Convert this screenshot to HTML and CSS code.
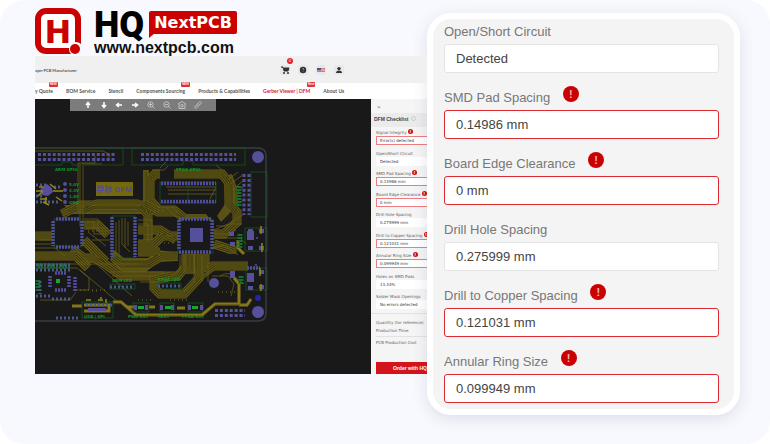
FILE: index.html
```html
<!DOCTYPE html>
<html lang="en">
<head>
<meta charset="utf-8">
<title>HQ NextPCB Gerber Viewer</title>
<link rel="stylesheet" href="styles.css">
</head>
<body>
<main class="hero">
  <div class="left">
    <header class="brand">
      <svg class="brand-mark" viewBox="0 0 46 46" aria-hidden="true">
        <rect x="3" y="3" width="40" height="40" rx="8" fill="#fff" stroke="#cb0000" stroke-width="6"/>
        <text x="23" y="35" text-anchor="middle" class="mark-letter">H</text>
        <circle cx="41" cy="41" r="7" fill="#f8f9fe"/>
        <circle cx="40" cy="41" r="5" fill="#cb0000"/>
      </svg>
      <div class="brand-words">
        <div class="brand-top"><span class="hq">HQ</span><span class="next">NextPCB</span></div>
        <div class="site">www.nextpcb.com</div>
      </div>
    </header>

    <section class="app">
      <div class="app-head">
        <span class="tagline">ayer PCB Manufacturer</span>
        <div class="head-icons">
          <button class="hicon" aria-label="Cart"><svg viewBox="0 0 10 10"><path d="M1 2h2l1 4h4l1-3H4" fill="#333" stroke="#333"/><circle cx="4" cy="8" r="1" fill="#333"/><circle cx="8" cy="8" r="1" fill="#333"/></svg><span class="count">0</span></button>
          <button class="hicon" aria-label="Help"><svg viewBox="0 0 10 10"><circle cx="5" cy="5" r="3.2" fill="#333"/><path d="M4 4q1-1.2 2 0q0 .7-1 1.2M5 6.3v.8" fill="none" stroke="#aaa" stroke-width=".7"/></svg></button>
          <button class="hicon" aria-label="Language"><svg viewBox="0 0 10 10"><path d="M1 3h8v4H1z" fill="#eed5d8"/><path d="M1 3.5h8M1 5h8M1 6.5h8" stroke="#d65c68" stroke-width=".8"/><path d="M1 3h4v2.3H1z" fill="#4b5295"/></svg></button>
          <button class="hicon" aria-label="Account"><svg viewBox="0 0 10 10"><circle cx="5" cy="3.6" r="1.7" fill="#333"/><path d="M2 8q0-2.6 3-2.6T8 8z" fill="#333"/></svg></button>
        </div>
      </div>
      <nav class="nav">
        <a href="#">y Quote<span class="new">NEW</span></a>
        <a href="#">BOM Service</a>
        <a href="#">Stencil</a>
        <a href="#">Components Sourcing<span class="new">NEW</span></a>
        <a href="#">Products &amp; Capabilities</a>
        <a href="#" class="current">Gerber Viewer | DFM<span class="new">New</span></a>
        <a href="#">About Us</a>
      </nav>
      <div class="work">
        <div class="viewer">
          <div class="tools">
            <button aria-label="Up"><svg viewBox="0 0 8 8"><path d="M4 7V2M2 4l2-2.500L6 4"/></svg></button>
            <button aria-label="Down"><svg viewBox="0 0 8 8"><path d="M4 1v5M2 4l2 2.500L6 4"/></svg></button>
            <button aria-label="Left"><svg viewBox="0 0 8 8"><path d="M7 4H2M4 2L1.500 4L4 6"/></svg></button>
            <button aria-label="Right"><svg viewBox="0 0 8 8"><path d="M1 4h5M4 2l2.500 2L4 6"/></svg></button>
            <button aria-label="Zoom in"><svg viewBox="0 0 8 8" class="thin"><circle cx="3.500" cy="3.500" r="2.700"/><path d="M5.500 5.500L7.500 7.500M2 3.500h3M3.500 2v3"/></svg></button>
            <button aria-label="Zoom out"><svg viewBox="0 0 8 8" class="thin"><circle cx="3.500" cy="3.500" r="2.700"/><path d="M5.500 5.500L7.500 7.500M2 3.500h3"/></svg></button>
            <button aria-label="Reset"><svg viewBox="0 0 8 8" class="thin"><path d="M0 3l4-2.500L8 3M1 3v4.500h6V3"/><circle cx="4" cy="4.700" r="1.300"/></svg></button>
            <button aria-label="Measure"><svg viewBox="0 0 8 8" class="thin"><path d="M.5 6L6 .5L7.500 2L2 7.500zM2.500 4l1 1M4 2.500l1 1"/></svg></button>
          </div>
          <svg class="board" viewBox="35 99 336 275" preserveAspectRatio="xMinYMin slice" role="img" aria-label="Circuit board">
            <defs>
              <path id="b1" d="M35 236H52M83 210L97 204H137L148 214V240M62 214L80 205H146L158 212H178M84 225H98L108 235M84 240L106 262M72 249L84 258H96L122 276H178L186 266V254"/>
              <path id="b2" d="M160 174H155L150 179V200L159 210H174L184 218M174 174H222L229 183V204L237 212V222L224 234H214"/>
              <path id="b3" d="M35 256H76L88 268M114 258L122 264H148L162 256H178M138 244H154L162 236H178M138 252H160M214 244L232 250V254M138 230H160L176 240"/>
              <path id="b4" d="M199 254V278L184 294H160L154 288V280L172 276M205 254V272L213 266H248M190 254V274"/>
            </defs>
            <path class="edge" d="M35 148H258Q266 148 266 156V313Q266 321 258 321H35"/>

            <g class="copper">
              <path class="solid" d="M64 205H148L160 214H72zM143 170h6v35h-6zM180 214h26l4 5h-32zM114 250l10 8h24l10-8 20 3v8l-20 1-12 10h-24l-12-12zM224 176l8-2 5 14 1 14-9 12-8 8-4-6 8-12zM184 254h18l-2 12-5 8z"/>
              <use href="#b2" class="w9"/><use href="#b2" class="w7"/><use href="#b2" class="w5"/><use href="#b2" class="w3"/><use href="#b2" class="w1"/>
              <use href="#b1" class="w9"/><use href="#b1" class="w7"/><use href="#b1" class="w5"/><use href="#b1" class="w3"/><use href="#b1" class="w1"/>
              <use href="#b3" class="w9"/><use href="#b3" class="w7"/><use href="#b3" class="w5"/><use href="#b3" class="w3"/><use href="#b3" class="w1"/>
              <use href="#b4" class="w9"/><use href="#b4" class="w7"/><use href="#b4" class="w5"/><use href="#b4" class="w3"/><use href="#b4" class="w1"/>
              <path class="cut" d="M146 172v34M227 176l5 12v24l-9 12M230 176l6 14v20l-8 12M72 208h76M68 211h82M122 262h26l10-7M125 266h23l10-7M188 255v12M192 255v16M196 255v14"/>
              <path class="line" d="M35 151h68l6 3v6M95 156v7H78v49M80 164v62M82 164h20M83 166v60M38 240h14M35 244h16M35 248h20l10 8M84 219h14v12h10M86 222h8v12h12M86 228h22M88 232l18 14M92 240h18M138 220h14v20M138 224h10v18M116 222v32M119 220v34M122 218v26l8 8M125 218v30M128 222v24M138 264H35M35 268h42l12 10v12H76M76 262h18l38 34M80 270l38 32M140 282h18M110 272h54M112 276h44M168 194h48M168 190h48M166 187h50l-6 12M228 180l10-8M230 184l14-10M232 190l12-10M234 196l10-10M236 204l8-4M214 230l14-6h14M214 234h14l8-4M214 238h26l6 6M214 248l10-3 14 10M216 226h10l18-12M208 262v20M212 276h16l6 8-3 12M220 276q10-6 16 2l8 6M180 255v15l-12 8M184 255v17l-10 10M194 255v28l-10 9M202 255v26M40 300h30l6-8M166 207l10 10M172 206l8 9M152 170h12l4-4M222 170l-6-5M160 168l6-6"/>
            </g>
            <g class="wide">
              <path d="M113 302h8l15 13h66l13-11h24v-20l-5-6M239 305h8l4-6M84 305h25v6H84M238 240v8l6 6"/>
              <path d="M72 306h10M127 307h8M149 307h6M177 308h8"/>
            </g>
            <path class="cut" d="M112 304h9l14 12h68l13-11h24"/>

            <g class="green">
              <path d="M35 148H123V165H72V162H62V165H35M132 148H245V165H193V161H183V165H132zM251 172H267V217H251zM245 228H267V251H245zM246 268H267V290H246zM160 182H216V203H160zM188 182V203M54 219H82V247H54zM112 216H135V258H112zM178 219H213V253H178zM82 302H113V318H82zM133 303H149V312H133zM160 303H174V312H160zM188 303H203V312H188zM110 284H135V289H110zM157 283H181V289H157z"/>
              <path class="hatch" d="M239 186V206M240 234V248M241 276V284M38 266H70M38 280V292"/>
              <g class="silk"><text x="55" y="171">ARM GPIO</text><text x="176" y="171">FPGA GPIO</text><text x="112" y="282">ARM LED</text><text x="158" y="281">FPGA LED</text><text x="84" y="318">USB | SPI</text><text x="128" y="318">PWR RST</text><text x="158" y="318">nRST</text><text x="182" y="318">FPGA RST</text><text x="69" y="186">5.0V</text><text x="69" y="192">3.3V</text><text x="69" y="198">1.8V</text><text x="69" y="204">GND</text></g>
            </g>

            <g class="pads">
              <path class="p4" d="M38 154.500H116M38 159.500H116M141 154.500H236M141 159.500H236M244 174V215M249 174V215M215 310.500H245M215 315.500H245"/>
              <path class="p3" d="M161 183.500H216M161 201.500H216M179 219H212M179 252H212M179 220V250M212 220V250M56 219H80M56 247H80M53 221V246M82 221V246M112 217V257M135 217V257M55 273H67M55 290H67M50 276V288M69 276V288M75 277V291M247 268H260"/>
              <path class="small" d="M36 265H72M36 270H72M36 296H50M52 299H70M40 281V294M56 318H80M36 185H46M36 202H60M36 196H42M54 187H62M158 286H181M110 287H134M86 305H112"/>
              <path class="p2" d="M43 186l4-2 5 4 1 4-5 4-6-1-2-5zM190 228h13v14h-13zM247 231h7v9h-7zM247 273h7v9h-7zM134 305h3v5h-3zM145 305h3v5h-3zM160 305h3v5h-3zM171 305h3v5h-3zM188 305h3v5h-3zM200 305h3v5h-3zM248 229h5v3h-5zM259 229h5v4h-5zM259 246h5v4h-5zM248 246h5v4h-5zM259 270h5v4h-5zM259 285h5v4h-5zM248 286h5v4h-5zM229 232h5v4h-5zM230 242h5v4h-5zM230 271h5v7h-5zM88 308h18v3H88z"/>
              <circle cx="258" cy="157" r="6"/><circle cx="258" cy="312" r="6"/><circle cx="214" cy="283" r="5"/><circle cx="65" cy="184" r="2"/><circle cx="65" cy="190" r="2"/><circle cx="65" cy="196" r="2"/><circle cx="65" cy="202" r="2"/><circle cx="256" cy="265" r="1"/><circle cx="257" cy="238" r="1"/>
            </g>
            <circle cx="258" cy="298" r="3" fill="#2626a0"/>
            <path class="yellow" d="M39 187h4M50 184l6 5M56 197l6 4M38 196l5-5M43 202l6 3M53 191h10M40 199h7M36 191h6M46 197v7M86 300h5M98 300h5M106 299v4M261 226v8M262 243v9M260 268v8M261 284v7M100 298h2"/>
            <path class="green-fill" d="M56 279h4v4h-4zM138 306h6v3h-6zM165 306h6v3h-6zM192 306h6v3h-6z"/>
            <path class="dots" d="M80 290h28M92 291h8M142 211h24M138 300h14M170 300h20M218 292h20M164 243h6M88 231h12"/>
            <rect x="96" y="182" width="37" height="14" fill="#75690f"/>
            <text x="114" y="192" text-anchor="middle" class="board-name">华秋 DFM</text>
          </svg>
        </div>
        <aside class="side">
          <div class="side-top">»</div>
          <h2 class="side-title">DFM Checklist <i></i></h2>
          <div class="mini-list">
            <div class="mini error"><label for="m1">Signal Integrity <b>!</b></label><input id="m1" readonly value="Error(s) detected"></div>
            <div class="mini"><label for="m2">Open/Short Circuit</label><input id="m2" readonly value="Detected"></div>
            <div class="mini error"><label for="m3">SMD Pad Spacing <b>!</b></label><input id="m3" readonly value="0.14986 mm"></div>
            <div class="mini error"><label for="m4">Board Edge Clearance <b>!</b></label><input id="m4" readonly value="0 mm"></div>
            <div class="mini"><label for="m5">Drill Hole Spacing</label><input id="m5" readonly value="0.275999 mm"></div>
            <div class="mini error"><label for="m6">Drill to Copper Spacing <b>!</b></label><input id="m6" readonly value="0.121031 mm"></div>
            <div class="mini error"><label for="m7">Annular Ring Size <b>!</b></label><input id="m7" readonly value="0.099949 mm"></div>
            <div class="mini"><label for="m8">Holes on SMD Pads</label><input id="m8" readonly value="13.34%"></div>
            <div class="mini"><label for="m9">Solder Mask Openings</label><input id="m9" readonly value="No errors detected"></div>
          </div>
          <div class="totals">
            <p>Quantity (for reference)</p>
            <p>Production Time</p>
            <p class="cost">PCB Production Cost</p>
          </div>
          <button class="order">Order with HQ</button>
        </aside>
      </div>
    </section>
  </div>

  <form class="card">
    <div class="field"><label for="f1">Open/Short Circuit</label><input id="f1" readonly value="Detected"></div>
    <div class="field error"><label for="f2">SMD Pad Spacing <b>!</b></label><input id="f2" readonly value="0.14986 mm"></div>
    <div class="field error"><label for="f3">Board Edge Clearance <b>!</b></label><input id="f3" readonly value="0 mm"></div>
    <div class="field"><label for="f4">Drill Hole Spacing</label><input id="f4" readonly value="0.275999 mm"></div>
    <div class="field error"><label for="f5">Drill to Copper Spacing <b>!</b></label><input id="f5" readonly value="0.121031 mm"></div>
    <div class="field error"><label for="f6">Annular Ring Size <b>!</b></label><input id="f6" readonly value="0.099949 mm"></div>
  </form>
</main>
</body>
</html>
```
FILE: styles.css
```css
* { box-sizing: border-box; }
body { margin: 0; background: #fff; font-family: "Liberation Sans", Arial, sans-serif; }
button { border: 0; padding: 0; background: none; font: inherit; }
input { font: inherit; min-width: 0; outline: 0; }

.hero {
  display: grid;
  grid-template-columns: minmax(0, 1fr) 313px;
  align-items: start;
  min-height: 100vh;
  padding: 8px 30px 0 35px;
  background: #f8f9fe;
  border-radius: 24px;
}

/* Brand */
.brand { display: flex; gap: 13px; height: 48px; }
.brand-mark { width: 46px; height: 46px; flex: none; }
.mark-letter { font: bold 32px "DejaVu Sans", sans-serif; fill: #cb0000; }
.brand-top { display: flex; height: 30px; gap: 5px; padding-top: 3px; }
.hq { font: 900 36px/28px Roboto, sans-serif; color: #000; }
.next {
  position: relative;
  height: 23px;
  padding: 0 5px;
  background: #cb0000;
  border-radius: 2px;
  color: #fff;
  font: bold 16px/23px "DejaVu Sans", sans-serif;
}
.next::after {
  content: "";
  position: absolute;
  left: 0;
  top: 22px;
  border-top: 5px solid #cb0000;
  border-right: 6px solid transparent;
}
.site { font-weight: bold; font-size: 16px; line-height: 20px; color: #111; }

/* Application window */
.app { overflow: hidden; background: #fff; font-family: Lato, sans-serif; font-size: 5px; line-height: 6px; color: #555; }
.app-head { position: relative; display: flex; align-items: center; height: 27px; background: #f0f0f0; }
.tagline { font-size: 4px; font-weight: bold; flex: 0 0 245px; padding-top: 2px; }
.head-icons { display: flex; gap: 8px; }
.hicon { position: relative; width: 10px; height: 10px; background: #e8e8e8; border-radius: 2px; }
.hicon svg { display: block; width: 10px; height: 10px; }
.count {
  position: absolute;
  left: 7px;
  top: -7px;
  width: 6px;
  height: 6px;
  border-radius: 50%;
  background: #e32020;
  color: #fff;
  font-size: 4px;
}
.nav { display: flex; align-items: center; gap: 13px; height: 16px; white-space: nowrap; font-weight: bold; }
.nav a { position: relative; color: #555; text-decoration: none; }
.nav .current { color: #d9202a; }
.new {
  position: absolute;
  right: -5px;
  top: -6px;
  padding: 0 1px;
  border-radius: 1px;
  background: #e03038;
  color: #fff;
  font-size: 3px;
  line-height: 5px;
}

.work { display: flex; height: 275px; }
.viewer { position: relative; flex: 1; min-width: 0; background: #191919; }
.tools {
  position: absolute;
  left: 35px;
  top: 0;
  display: flex;
  align-items: center;
  justify-content: space-between;
  width: 146px;
  height: 12px;
  padding: 0 14px;
  background: #7c7c7c;
}
.tools button, .tools svg { display: block; width: 8px; height: 8px; }
.tools svg { fill: none; stroke: #fff; stroke-width: 1.5; }
.tools .thin { stroke: #ddd; stroke-width: 0.7; }

/* Board drawing */
.board { display: block; width: 100%; height: 275px; }
.board path, .board use { fill: none; }
.edge { stroke: #3a3a45; stroke-width: 1.5; }
.board .solid { fill: #5a5114; }
.w9, .w5, .w1, .line { stroke: #685e15; }
.w7, .w3, .cut { stroke: #3a3511; }
.w9 { stroke-width: 9; }
.w7 { stroke-width: 7; }
.w5 { stroke-width: 5; }
.w3 { stroke-width: 3; }
.w1 { stroke-width: 1; }
.line { stroke-width: 0.8; }
.cut { stroke-width: 0.6; }
.wide { stroke: #857719; stroke-width: 3; }
.green { stroke: #145c20; stroke-width: 0.7; }
.green .hatch { stroke: #13702a; stroke-width: 5; stroke-dasharray: 2 1; }
.silk { font: bold 4px "DejaVu Sans", sans-serif; fill: #11922b; stroke: none; }
.pads circle, .board .p2 { fill: #555099; }
.p4 { stroke: #555099; stroke-width: 3; stroke-dasharray: 3 1.9; }
.p3 { stroke: #514d9c; stroke-width: 3.5; stroke-dasharray: 2 1; }
.small { stroke: #45598a; stroke-width: 3; stroke-dasharray: 2 2; }
.yellow { stroke: #948719; stroke-width: 1.5; }
.board .green-fill { fill: #18a62e; }
.dots { stroke: #7b701b; stroke-dasharray: 1 3; }
.board-name { font: bold 8px "Liberation Sans", "Noto Sans CJK SC", sans-serif; fill: #4f4a9c; }

/* Small checklist */
.side { display: flex; flex-direction: column; flex: 0 0 56px; overflow: hidden; background: #f5f5f5; white-space: nowrap; color: #606060; font-family: "DejaVu Sans", sans-serif; font-size: 4px; }
.side-top { height: 14px; padding: 5px 6px 0; font-size: 6px; line-height: 5px; }
.side-title { margin: 0; height: 14px; padding: 3px; background: #ebebeb; color: #444; font: bold 5px/7px "Liberation Sans", sans-serif; }
.side-title i { display: inline-block; width: 5px; height: 5px; margin-left: 1px; border: 1px solid #ccc; border-radius: 50%; }
.mini-list { display: flex; flex: 1; flex-direction: column; justify-content: space-between; padding: 2px 0 4px 5px; border-bottom: 1px solid #e2e2e2; }
.mini label { display: block; height: 7px; line-height: 7px; }
.mini input { display: block; width: 100%; height: 9px; padding: 0 4px; border: 0; background: #fff; color: #333; }
.mini.error input { border: 1px solid #ee7c80; border-right: 0; padding: 0 3px; }
.mini b {
  display: inline-block;
  width: 5px;
  height: 5px;
  border-radius: 50%;
  background: #d20a10;
  color: #fff;
  font-size: 4px;
  line-height: 5px;
  text-align: center;
  vertical-align: 1px;
}
.totals { height: 48px; padding: 6px 0 0 5px; }
.totals p { margin: 0; height: 8px; }
.totals .cost { padding-top: 3px; border-top: 1px solid #e2e2e2; }
.order { height: 12px; margin-left: 5px; padding-left: 17px; background: #d3141b; color: #fff; font: bold 5px/12px "Liberation Sans", sans-serif; text-align: left; }

/* Enlarged checklist */
.card {
  display: flex;
  flex-direction: column;
  gap: 13px;
  margin-top: 5px;
  padding: 1px 15px 6px 11px;
  border: 6px solid #fff;
  border-radius: 24px;
  background: #f4f4f4;
  box-shadow: 0 4px 16px rgba(60, 70, 110, 0.14);
  font-size: 13px;
}
.field { display: flex; flex-direction: column; }
.field label { height: 24px; line-height: 23px; color: #777; }
.field input { height: 29px; padding: 0 11px; border: 1px solid #e4e4e4; border-radius: 3px; background: #fff; color: #444; }
.field.error input { border-color: #dd2a30; }
.field b {
  display: inline-block;
  width: 16px;
  height: 16px;
  margin-left: 9px;
  border-radius: 50%;
  background: #cb0000;
  color: #f2b5b5;
  font-size: 11px;
  line-height: 16px;
  text-align: center;
  vertical-align: 4px;
}
```
